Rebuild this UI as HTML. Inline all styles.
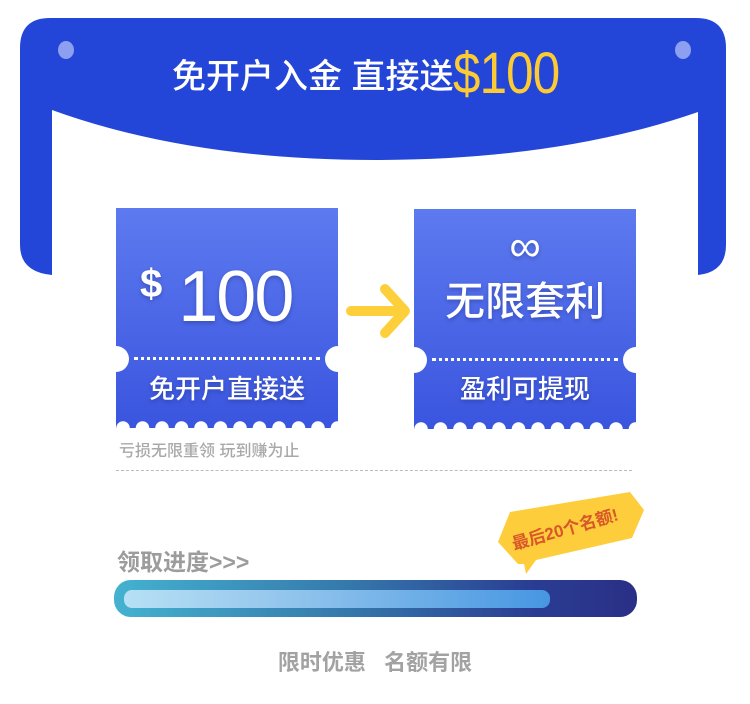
<!DOCTYPE html>
<html><head><meta charset="utf-8"><style>
*{margin:0;padding:0;box-sizing:border-box}
body{width:750px;height:704px;background:#fff;position:relative;overflow:hidden;font-family:"Liberation Sans","Noto Sans CJK SC",sans-serif}
.abs{position:absolute}
.card{position:absolute;width:222px;height:220px;background:linear-gradient(180deg,#5d7af0,#3a55de);overflow:hidden}
.notch{position:absolute;width:26px;height:26px;border-radius:50%;background:#fff;top:138px}
.dots{position:absolute;left:18px;right:18px;top:149px;border-top:3px dotted #fff}
.scal{position:absolute;bottom:-7px;left:0;right:0;height:14px;background:radial-gradient(circle at 9px 7px,#fff 6.5px,transparent 7px) -2px 0/19.5px 14px repeat-x}
.t{color:#fff;text-align:center;position:absolute;left:0;right:0;text-shadow:0 2px 4px rgba(0,0,60,.25);font-weight:500}
</style></head><body>
<svg class="abs" style="left:0;top:0" width="750" height="290">
<path d="M20 48 Q20 18 50 18 L696 18 Q726 18 726 48 L726 245 Q726 272 698 275 L698 112 Q560 160 375 160 Q190 160 52 110 L52 275 Q20 272 20 245 Z" fill="#2446d8"/>
<ellipse cx="66" cy="50" rx="8" ry="9" fill="#8c9ff0"/>
<ellipse cx="683" cy="50" rx="8" ry="9" fill="#8c9ff0"/>
</svg>
<div class="abs" style="left:172px;top:40px;white-space:nowrap;color:#fff;font-size:34px;font-weight:500"><span style="vertical-align:middle">免开户入金 直接送</span><span style="display:inline-block;color:#fccb33;font-size:58px;vertical-align:middle;letter-spacing:-1px;transform:scaleX(.85);transform-origin:left">$100</span></div>

<div class="card" style="left:116px;top:208px">
<div class="t" style="top:34px;font-size:72px;line-height:84px;text-align:left;left:24px;letter-spacing:-2px"><span style="font-size:40px;vertical-align:24px;font-weight:bold">$</span>&nbsp;100</div>
<div class="notch" style="left:-13px"></div><div class="notch" style="right:-13px"></div><div class="dots"></div>
<div class="t" style="top:163px;font-size:26px;line-height:36px">免开户直接送</div>
<div class="scal"></div>
</div>
<svg class="abs" style="left:345px;top:280px" width="70" height="60"><path d="M6 31 L58 31 M40 9 L60 31 L40 53" fill="none" stroke="#fdd03b" stroke-width="10" stroke-linecap="round" stroke-linejoin="round"/></svg>
<div class="card" style="left:414px;top:209px">
<div class="t" style="top:18px;font-size:44px;line-height:40px;font-weight:normal">∞</div>
<div class="t" style="top:66px;font-size:40px;line-height:54px">无限套利</div>
<div class="notch" style="left:-13px"></div><div class="notch" style="right:-13px"></div><div class="dots"></div>
<div class="t" style="top:162px;font-size:26px;line-height:36px">盈利可提现</div>
<div class="scal"></div>
</div>
<div class="abs" style="left:119px;top:437px;font-size:16px;color:#a9a9a9;font-weight:500">亏损无限重领 玩到赚为止</div>
<div class="abs" style="left:116px;top:470px;width:516px;border-top:1px dashed #bbb"></div>

<div class="abs" style="left:117px;top:543px;font-size:23px;color:#9c9c9c;font-weight:bold">领取进度&gt;&gt;&gt;</div>
<svg class="abs" style="left:490px;top:488px" width="160" height="92">
<polygon points="8,54 20,24 140,4 154,22 142,50 46,72 36,86 34,76 28,76" fill="#fecd3b"/>
<text x="0" y="0" transform="translate(24,62) rotate(-16)" font-size="17" font-weight="bold" fill="#d8582a" font-family="Liberation Sans,Noto Sans CJK SC,sans-serif">最后20个名额!</text>
</svg>
<div class="abs" style="left:114px;top:580px;width:523px;height:37px;border-radius:17px;background:linear-gradient(90deg,#44b2d0,#3578ab 45%,#2a3d92 80%,#2a2f86)"></div>
<div class="abs" style="left:124px;top:590px;width:426px;height:18px;border-radius:8px;background:linear-gradient(90deg,#b7e0f4,#91c4ec 40%,#4696e2)"></div>
<div class="abs" style="left:0;right:0;top:645px;text-align:center;font-size:22px;color:#a2a2a2;font-weight:bold">限时优惠&nbsp;&nbsp;&nbsp;名额有限</div>
</body></html>
